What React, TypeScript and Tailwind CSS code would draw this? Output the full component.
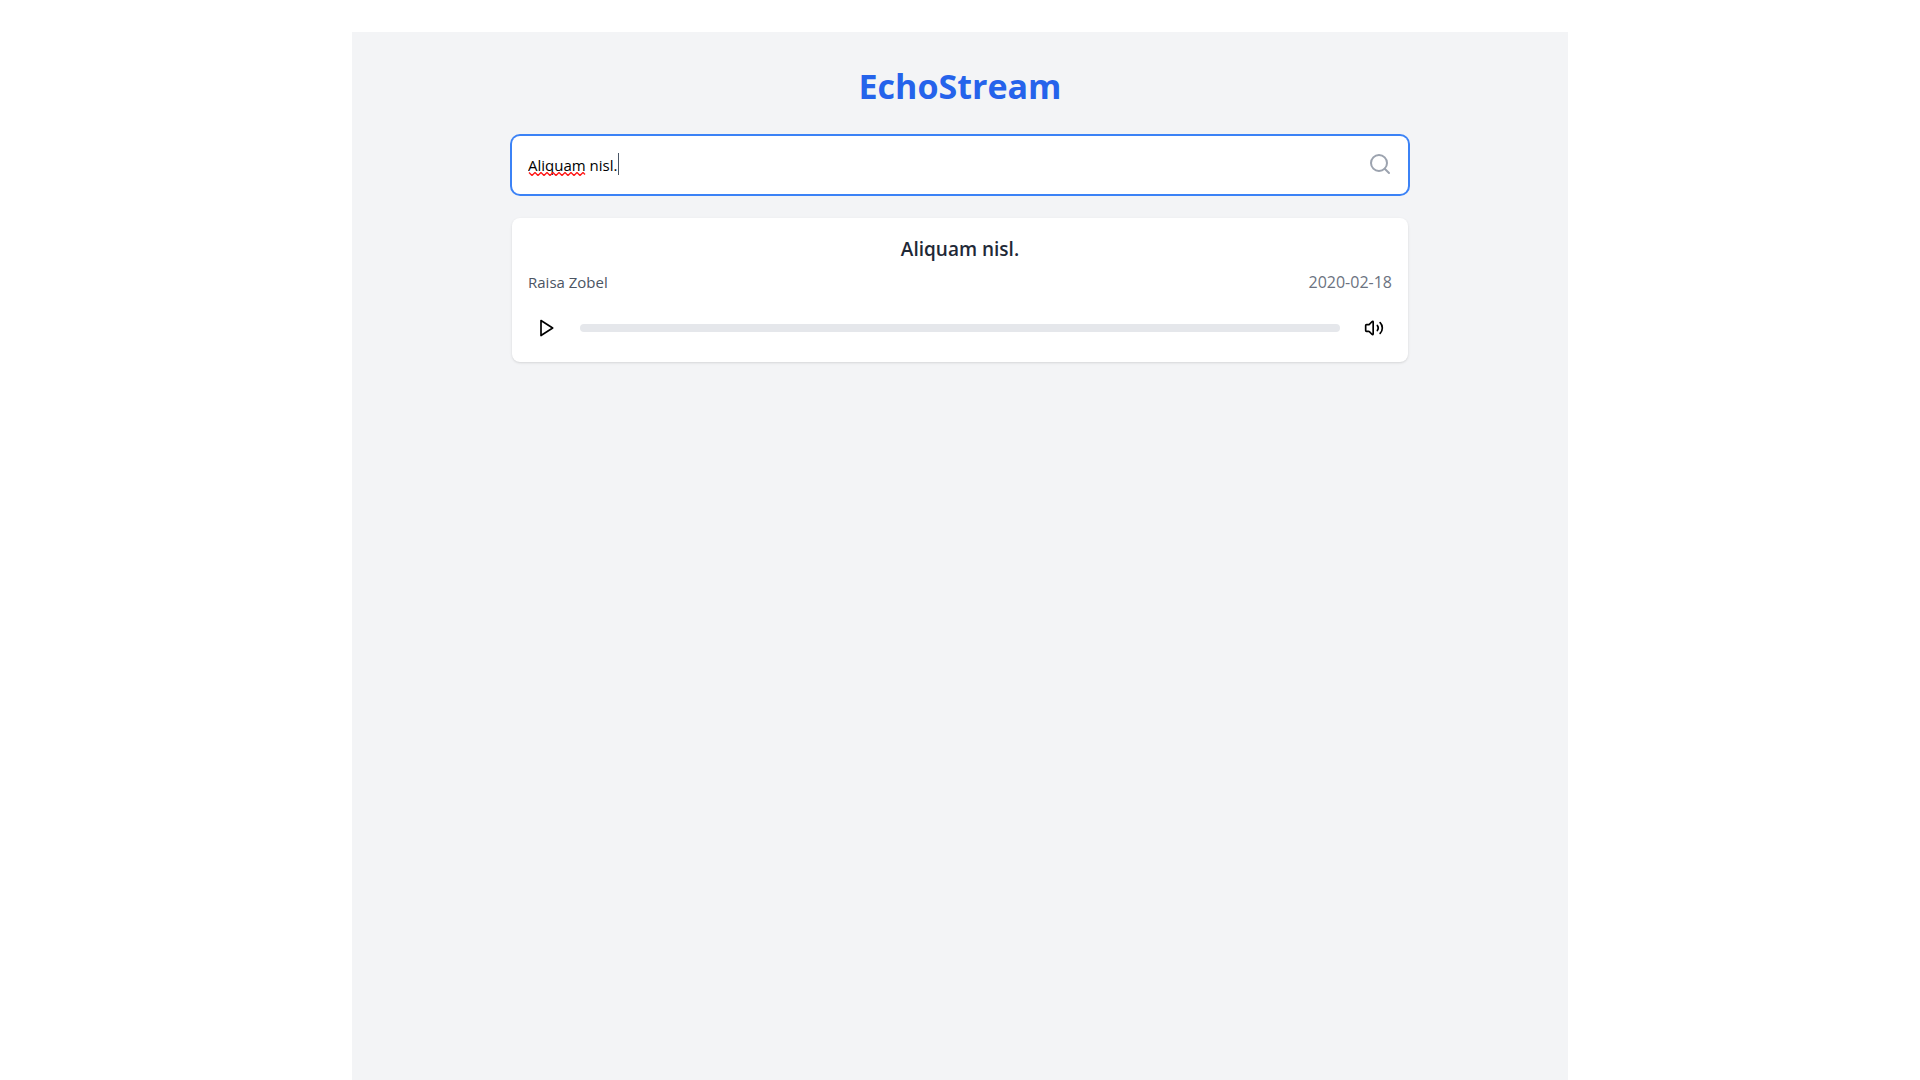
import { useState } from "react";

function SearchBar() {
  const [query, setQuery] = useState("Aliquam nisl.");
  return (
    <div className="relative mb-6">
      <input
        type="text"
        aria-label="Search podcasts"
        value={query}
        spellCheck={false}
        onChange={(e) => setQuery(e.target.value)}
        className="block h-[58px] w-full rounded-lg bg-white p-4 pr-12 text-[15px] leading-6 text-black caret-transparent outline-none ring-2 ring-[#3b82f6]"
      />
      {query === "Aliquam nisl." && (
        <>
          <svg
            className="pointer-events-none absolute left-4 top-9"
            width="60"
            height="4"
            viewBox="0 0 60 4"
            fill="none"
            stroke="#ff1a1a"
            strokeWidth="1.4"
            aria-hidden="true"
          >
            <path d="M1 .5l3 3 3-3 3 3 3-3 3 3 3-3 3 3 3-3 3 3 3-3 3 3 3-3 3 3 3-3 3 3 3-3 3 3 3-3 2 2" />
          </svg>
          <span className="pointer-events-none absolute left-[106px] top-[17px] h-[22px] w-px bg-gray-600" />
        </>
      )}
      <svg
        className="pointer-events-none absolute right-4 top-4 size-6 text-[#9ca3af]"
        viewBox="0 0 24 24"
        fill="none"
        stroke="currentColor"
        strokeWidth="2"
        strokeLinecap="round"
        strokeLinejoin="round"
        aria-hidden="true"
      >
        <circle cx="11" cy="11" r="8" />
        <path d="m21 21-4.3-4.3" />
      </svg>
    </div>
  );
}

function EpisodeCard({ title, author, date }: { title: string; author: string; date: string }) {
  return (
    <article className="rounded-lg bg-white p-4 shadow-[0_1px_3px_rgba(0,0,0,0.1),0_1px_2px_-1px_rgba(0,0,0,0.1)]">
      <h2 className="mb-[6px] text-center text-[19px] leading-[30px] font-semibold text-[#1f2937]">{title}</h2>
      <div className="mb-4 flex justify-between text-base">
        <span className="text-[15px] leading-6 text-[#4b5563]">{author}</span>
        <span className="text-[#6b7280]">{date}</span>
      </div>
      <div className="flex items-center gap-4">
        <button type="button" aria-label="Play" className="rounded-full p-2 text-black">
          <svg className="size-5" viewBox="0 0 24 24" fill="none" stroke="currentColor" strokeWidth="2" strokeLinecap="round" strokeLinejoin="round">
            <polygon points="6 3 20 12 6 21 6 3" />
          </svg>
        </button>
        <div className="h-2 flex-1 rounded-full bg-[#e5e7eb]" role="progressbar" aria-label="Playback progress" aria-valuenow={0} />
        <button type="button" aria-label="Volume" className="rounded-full p-2 text-black">
          <svg className="size-5" viewBox="0 0 24 24" fill="none" stroke="currentColor" strokeWidth="2" strokeLinecap="round" strokeLinejoin="round">
            <path d="M11 4.702a.705.705 0 0 0-1.203-.498L6.413 7.587A1.4 1.4 0 0 1 5.416 8H3a1 1 0 0 0-1 1v6a1 1 0 0 0 1 1h2.416a1.4 1.4 0 0 1 .997.413l3.383 3.384A.705.705 0 0 0 11 19.298z" />
            <path d="M16 9a5 5 0 0 1 0 6" />
            <path d="M19.364 18.364a9 9 0 0 0 0-12.728" />
          </svg>
        </button>
      </div>
    </article>
  );
}

export default function App() {
  return (
    <div className="mx-auto max-w-7xl bg-white px-8 pt-8 font-['Segoe_UI','Open_Sans',sans-serif]">
      <main className="min-h-screen bg-[#f3f4f6] p-8">
        <div className="mx-auto max-w-4xl">
          <h1 className="mb-7 text-center text-[34px] leading-11 font-bold text-[#2563eb]">EchoStream</h1>
          <SearchBar />
          <EpisodeCard title="Aliquam nisl." author="Raisa Zobel" date="2020-02-18" />
        </div>
      </main>
    </div>
  );
}
